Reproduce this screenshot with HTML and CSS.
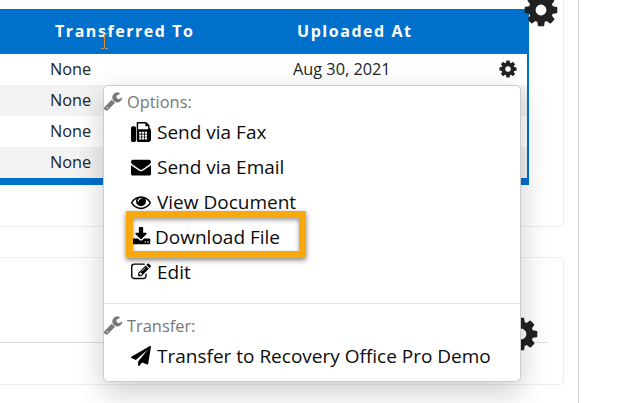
FILE: index.html
```html
<!DOCTYPE html>
<html lang="en">
<head>
    <meta charset="UTF-8">
    <meta name="viewport" content="width=device-width, initial-scale=1.0">
    <title>Documents</title>
    <link rel="stylesheet" href="styles.css">
</head>
<body>

    <svg class="sprites" xmlns="http://www.w3.org/2000/svg">
        <symbol id="i-cog" viewBox="0 0 1792 1792"><path d="M1152 896q0-106-75-181t-181-75-181 75-75 181 75 181 181 75 181-75 75-181zm512-109v222q0 12-8 23t-20 13l-185 28q-19 54-39 91 35 50 107 138 10 12 10 25t-9 23q-27 37-99 108t-94 71q-12 0-26-9l-138-108q-44 23-91 38-16 136-29 186-7 28-36 28h-222q-14 0-24.5-8.5t-11.5-21.5l-28-184q-49-16-90-37l-141 107q-10 9-25 9-14 0-25-11-126-114-165-168-7-10-7-23 0-12 8-23 15-21 51-66.5t54-70.5q-27-50-41-99l-183-27q-13-2-21-12.5t-8-23.5v-222q0-12 8-23t19-13l186-28q14-46 39-92-40-57-107-138-10-12-10-24 0-10 9-23 26-36 98.5-107.5t94.5-71.5q13 0 26 10l138 107q44-23 91-38 16-136 29-186 7-28 36-28h222q14 0 24.5 8.5t11.5 21.5l28 184q49 16 90 37l142-107q9-9 24-9 13 0 25 10 129 119 165 170 7 8 7 22 0 12-8 23-15 21-51 66.5t-54 70.5q26 50 41 98l183 28q13 2 21 12.5t8 23.5z"/></symbol>
        <symbol id="i-wrench" viewBox="0 0 1792 1792"><path d="M448 1472q0-26-19-45t-45-19-45 19-19 45 19 45 45 19 45-19 19-45zm644-420l-682 682q-37 37-90 37-52 0-91-37l-106-108q-38-36-38-90 0-53 38-91l681-681q39 98 114.5 173.5t173.5 114.5zm634-435q0 39-23 106-47 134-164.5 217.5t-258.5 83.5q-185 0-316.5-131.5t-131.5-316.5 131.5-316.5 316.5-131.5q58 0 121.5 16.5t107.5 46.5q16 11 16 28t-16 28l-293 169v224l193 107q5-3 79-48.5t135.5-81 70.5-35.5q15 0 23.5 10t8.5 25z"/></symbol>
        <symbol id="i-fax" viewBox="0 0 1792 1792"><path d="M288 384q66 0 113 47t47 113v1088q0 66-47 113t-113 47h-128q-66 0-113-47t-47-113v-1088q0-66 47-113t113-47h128zm1376 163q58 34 93 93t35 128v768q0 106-75 181t-181 75h-864q-66 0-113-47t-47-113v-1536q0-40 28-68t68-28h672q40 0 88 20t76 48l152 152q28 28 48 76t20 88v163zm-736 989v-128q0-14-9-23t-23-9h-128q-14 0-23 9t-9 23v128q0 14 9 23t23 9h128q14 0 23-9t9-23zm0-256v-128q0-14-9-23t-23-9h-128q-14 0-23 9t-9 23v128q0 14 9 23t23 9h128q14 0 23-9t9-23zm0-256v-128q0-14-9-23t-23-9h-128q-14 0-23 9t-9 23v128q0 14 9 23t23 9h128q14 0 23-9t9-23zm256 512v-128q0-14-9-23t-23-9h-128q-14 0-23 9t-9 23v128q0 14 9 23t23 9h128q14 0 23-9t9-23zm0-256v-128q0-14-9-23t-23-9h-128q-14 0-23 9t-9 23v128q0 14 9 23t23 9h128q14 0 23-9t9-23zm0-256v-128q0-14-9-23t-23-9h-128q-14 0-23 9t-9 23v128q0 14 9 23t23 9h128q14 0 23-9t9-23zm256 512v-128q0-14-9-23t-23-9h-128q-14 0-23 9t-9 23v128q0 14 9 23t23 9h128q14 0 23-9t9-23zm0-256v-128q0-14-9-23t-23-9h-128q-14 0-23 9t-9 23v128q0 14 9 23t23 9h128q14 0 23-9t9-23zm0-256v-128q0-14-9-23t-23-9h-128q-14 0-23 9t-9 23v128q0 14 9 23t23 9h128q14 0 23-9t9-23zm96-384v-256h-160q-40 0-68-28t-28-68v-160h-640v512h896z"/></symbol>
        <symbol id="i-envelope" viewBox="0 0 1792 1792"><path d="M1792 710v794q0 66-47 113t-113 47h-1472q-66 0-113-47t-47-113v-794q44 49 101 87 362 246 497 345 57 42 92.5 65.5t94.5 48 110 24.5h2q51 0 110-24.5t94.5-48 92.5-65.5q170-123 498-345 57-39 100-87zm0-294q0 79-49 151t-122 123q-376 261-468 325-10 7-42.5 30.5t-54 38-52 32.5-57.5 27-50 9h-2q-23 0-50-9t-57.5-27-52-32.5-54-38-42.5-30.5q-91-64-262-182.5t-205-142.5q-62-42-117-115.5t-55-136.5q0-78 41.5-130t118.5-52h1472q65 0 112.5 47t47.5 113z"/></symbol>
        <symbol id="i-eye" viewBox="0 0 1792 1792"><path d="M1664 960q-152-236-381-353 61 104 61 225 0 185-131.5 316.5t-316.5 131.5-316.5-131.5-131.5-316.5q0-121 61-225-229 117-381 353 133 205 333.5 326.5t434.5 121.5 434.5-121.5 333.5-326.5zm-720-384q0-20-14-34t-34-14q-125 0-214.5 89.5t-89.5 214.5q0 20 14 34t34 14 34-14 14-34q0-86 61-147t147-61q20 0 34-14t14-34zm848 384q0 34-20 69-140 230-376.5 368.5t-499.5 138.5-499.5-139-376.5-368q-20-35-20-69t20-69q140-229 376.5-368t499.5-139 499.5 139 376.5 368q20 35 20 69z"/></symbol>
        <symbol id="i-download" viewBox="0 0 1792 1792"><path d="M1344 1344q0-26-19-45t-45-19-45 19-19 45 19 45 45 19 45-19 19-45zm256 0q0-26-19-45t-45-19-45 19-19 45 19 45 45 19 45-19 19-45zm128-224v320q0 40-28 68t-68 28h-1472q-40 0-68-28t-28-68v-320q0-40 28-68t68-28h465l135 136q58 56 136 56t136-56l136-136h464q40 0 68 28t28 68zm-325-569q17 41-14 70l-448 448q-18 19-45 19t-45-19l-448-448q-31-29-14-70 17-39 59-39h256v-448q0-26 19-45t45-19h256q26 0 45 19t19 45v448h256q42 0 59 39z"/></symbol>
        <symbol id="i-edit" viewBox="0 0 1792 1792"><path d="M888 1184l116-116-152-152-116 116v56h96v96h56zm440-720q-16-16-33 1l-350 350q-17 17-1 33t33-1l350-350q17-17 1-33zm80 594v190q0 119-84.5 203.5t-203.5 84.5h-832q-119 0-203.5-84.5t-84.5-203.5v-832q0-119 84.5-203.5t203.5-84.5h832q63 0 117 25 15 7 18 23 3 17-9 29l-49 49q-14 14-32 8-23-6-45-6h-832q-66 0-113 47t-47 113v832q0 66 47 113t113 47h832q66 0 113-47t47-113v-126q0-13 9-22l64-64q15-15 35-7t20 29zm-96-738l288 288-672 672h-288v-288zm444 132l-92 92-288-288 92-92q28-28 68-28t68 28l152 152q28 28 28 68t-28 68z"/></symbol>
        <symbol id="i-plane" viewBox="0 0 1792 1792"><path d="M1764 11q33 24 27 64l-256 1536q-5 29-32 45-14 8-31 8-11 0-24-5l-453-185-242 295q-18 23-49 23-13 0-22-4-19-7-30.5-23.5t-11.5-36.5v-349l864-1059-1069 925-395-162q-37-14-40-55-2-40 32-59l1664-960q15-9 32-9 20 0 36 11z"/></symbol>
    </svg>

    <div id="page">
        <div id="content">

            <div class="card card-top">
                <svg class="gear gear-top"><use href="#i-cog"/></svg>
                <div id="table-wrap">
                    <table>
                        <thead>
                            <tr>
                                <th class="col-to">Transferred To</th>
                                <th class="col-date">Uploaded At</th>
                                <th class="col-action"></th>
                            </tr>
                        </thead>
                        <tbody>
                            <tr>
                                <td>None</td>
                                <td>Aug 30, 2021</td>
                                <td class="cell-action"><svg class="gear-small"><use href="#i-cog"/></svg></td>
                            </tr>
                            <tr class="shaded"><td>None</td><td></td><td></td></tr>
                            <tr><td>None</td><td></td><td></td></tr>
                            <tr class="shaded"><td>None</td><td></td><td></td></tr>
                        </tbody>
                    </table>
                </div>
            </div>

            <div class="card card-bottom">
                <svg class="gear gear-bottom"><use href="#i-cog"/></svg>
                <div class="card-rule"></div>
            </div>

        </div>
    </div>

    <div id="menu">
        <div class="menu-label"><svg class="icon-label"><use href="#i-wrench"/></svg>Options:</div>
        <div class="menu-item"><svg class="icon"><use href="#i-fax"/></svg>Send via Fax</div>
        <div class="menu-item"><svg class="icon"><use href="#i-envelope"/></svg>Send via Email</div>
        <div class="menu-item"><svg class="icon"><use href="#i-eye"/></svg>View Document</div>
        <div class="menu-item highlight"><svg class="icon icon-download"><use href="#i-download"/></svg>Download File</div>
        <div class="menu-item"><svg class="icon"><use href="#i-edit"/></svg>Edit</div>
        <div class="menu-divider"></div>
        <div class="menu-label"><svg class="icon-label"><use href="#i-wrench"/></svg>Transfer:</div>
        <div class="menu-item"><svg class="icon"><use href="#i-plane"/></svg>Transfer to Recovery Office Pro Demo</div>
    </div>

    <!-- text cursor left in the screenshot -->
    <svg id="cursor" width="7" height="16" viewBox="0 0 7 16"><path d="M0 .5h3M4 .5h3M3.5 1v14M0 15.5h3M4 15.5h3" fill="none" stroke="#e8882a" stroke-width="1"/></svg>

</body>
</html>
```

FILE: styles.css
```css
body {
    font-family: "Open Sans", sans-serif;
    background-color: white;
    margin: 0;
    padding: 0;
    color: #212529;
    overflow: hidden;
}

.sprites {
    display: none;
}

#page {
    width: 578px;
    height: 403px;
    border-right: 1px solid #d0d0d0;
}

#content {
    width: 564px;
    display: flex;
    flex-direction: column;
    gap: 30px;
}

.card {
    position: relative;
    box-sizing: border-box;
    border: 1px solid #eeeeee;
    border-left: none;
    border-radius: 0 5px 5px 0;
}

.card-top {
    height: 227px;
    border-top: none;
    border-top-right-radius: 0;
    padding-top: 9px;
}

.card-bottom {
    height: 128px;
    padding-top: 84px;
}

.card-rule {
    width: 548px;
    height: 1px;
    background-color: #dddddd;
}

.gear {
    position: absolute;
    width: 38px;
    height: 38px;
    fill: #212121;
}

.gear-top {
    left: 522px;
    top: -9px;
}

.gear-bottom {
    left: 502px;
    top: 57px;
}

#table-wrap {
    width: 529px;
    box-sizing: border-box;
    border-right: 2px solid #0070cd;
    border-bottom: 7px solid #0070cd;
}

table {
    width: 100%;
    border-collapse: collapse;
    table-layout: fixed;
}

th {
    height: 45px;
    box-sizing: border-box;
    padding: 0 0 2px 0;
    background-color: #0070cd;
    color: white;
    font-size: 16px;
    font-weight: 700;
    letter-spacing: 1.55px;
    text-align: left;
}

.col-to {
    width: 293px;
    padding-left: 55px;
}

.col-date {
    width: 204px;
    padding-left: 4px;
}

td {
    height: 31px;
    box-sizing: border-box;
    padding: 0 0 2px 0;
    font-size: 16.3px;
}

td:first-child {
    padding-left: 50px;
}

.shaded td {
    background-color: #f2f2f2;
}

.cell-action {
    line-height: 0;
    padding-left: 1px;
}

.gear-small {
    width: 20px;
    height: 20px;
    fill: #212121;
}

#menu {
    position: absolute;
    left: 103px;
    top: 85px;
    width: 418px;
    height: 297px;
    box-sizing: border-box;
    background-color: white;
    border: 1px solid #cccccc;
    border-radius: 5px;
    box-shadow: 0 10px 30px rgba(0, 0, 0, 0.2);
}

.menu-label {
    display: flex;
    align-items: center;
    height: 28px;
    box-sizing: border-box;
    padding-top: 2px;
    color: #777777;
    font-size: 16.4px;
}

.icon-label {
    width: 20px;
    height: 20px;
    margin-left: -1px;
    margin-right: 4px;
    fill: #777777;
}

.menu-item {
    position: relative;
    display: flex;
    align-items: center;
    height: 35px;
    padding-left: 27px;
    color: #0c0c0c;
    font-size: 19px;
}

.icon {
    width: 20px;
    height: 20px;
    margin-right: 6px;
    fill: #000000;
}

.icon-download {
    margin-right: 4px;
}

.highlight::after {
    content: "";
    position: absolute;
    left: 22px;
    top: -8px;
    width: 180px;
    height: 47px;
    box-sizing: border-box;
    border: 7px solid #f9a80e;
    box-shadow: 0 2px 5px rgba(0, 0, 0, 0.5), inset 0 2px 4px rgba(0, 0, 0, 0.4);
}

.menu-divider {
    height: 1px;
    margin-top: 14px;
    margin-bottom: 6px;
    background-color: #e4e4e4;
}

#cursor {
    position: absolute;
    left: 101px;
    top: 33px;
}
```
